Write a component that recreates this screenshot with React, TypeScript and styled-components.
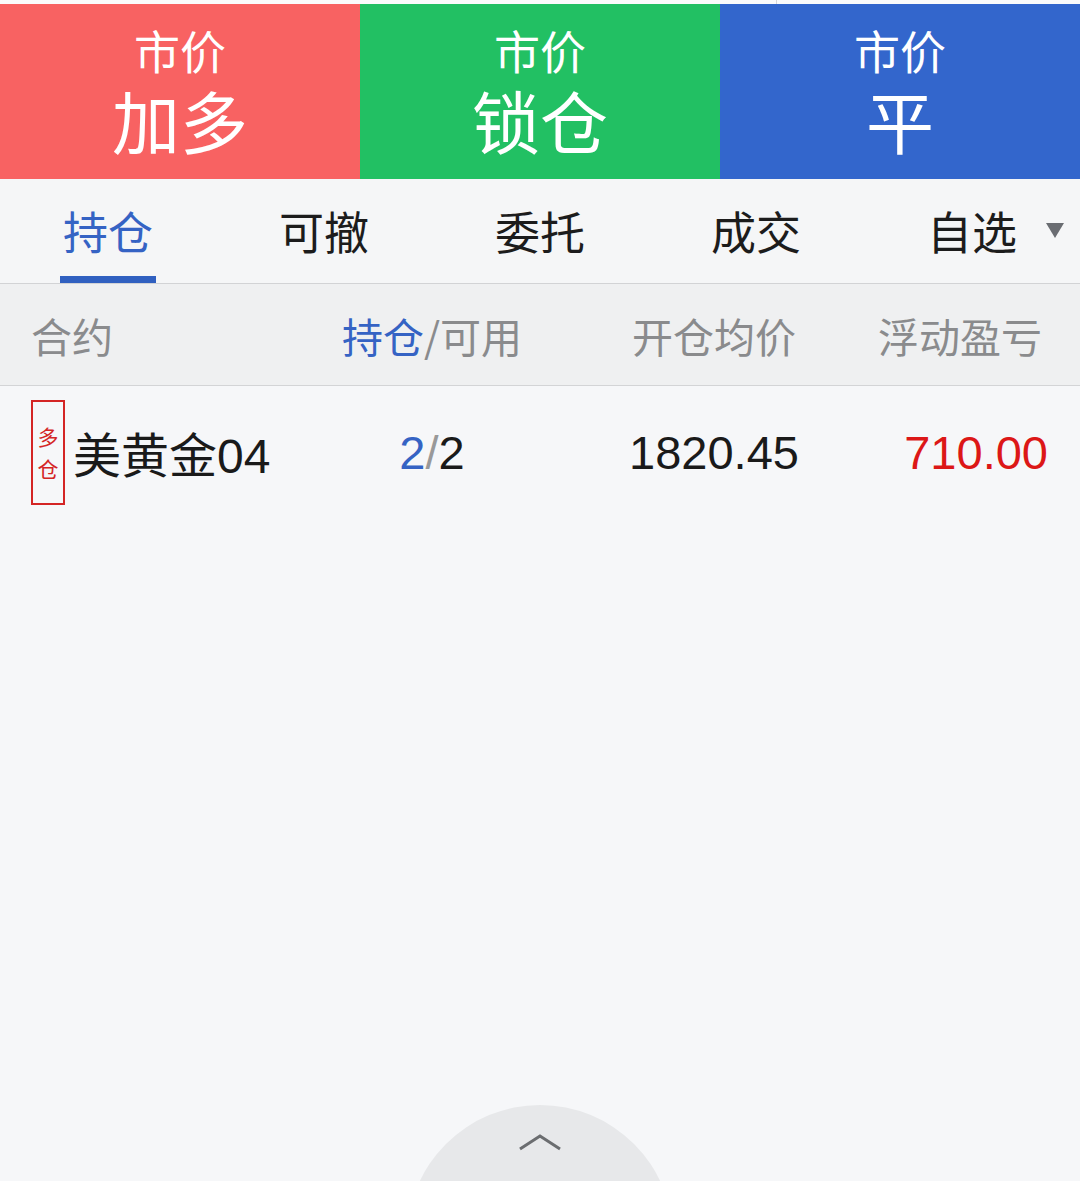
import React, { FC, ReactElement, useState } from 'react';
import { styled, createGlobalStyle } from 'styled-components';

const GlobalStyle = createGlobalStyle`
    html, body {
        margin: 0;
        padding: 0;
        background: #f6f7f9;
    }
    body {
        font-family: "Liberation Sans", "Noto Sans CJK SC", sans-serif;
    }
`

const Page = styled.div`
    display: flex;
    flex-direction: column;
    min-height: 100vh;
    width: 1080px;
    background: #f6f7f9;
`

const TopStrip = styled.div`
    display: grid;
    grid-template-columns: 776px 1fr;
    height: 4px;
    background: #fbfbfb;

    & > div + div {
        border-left: 1px solid #d8d8d8;
    }
`

const ActionBar = styled.div`
    display: grid;
    grid-template-columns: repeat(3, 1fr);
    height: 175px;
`

const ActionButton = styled.button<{ $bg: string }>`
    display: flex;
    flex-direction: column;
    align-items: center;
    justify-content: center;
    gap: 2px;
    border: none;
    margin: 0;
    padding: 0;
    background: ${p => p.$bg};
    color: #ffffff;
    font-family: "Noto Sans CJK SC", sans-serif;
    cursor: pointer;
`

const ActionSmall = styled.span`
    font-size: 46px;
    line-height: 1.2;
`

const ActionBig = styled.span`
    font-size: 68px;
    line-height: 1.2;
`

const TabBar = styled.div`
    display: grid;
    grid-template-columns: repeat(5, 1fr);
    height: 104px;
    background: #f5f6f7;
    border-bottom: 1px solid #d2d3d5;
`

const Tab = styled.div<{ $active?: boolean }>`
    position: relative;
    display: flex;
    align-items: center;
    justify-content: center;
    padding-bottom: 2px;
    font-family: "Noto Sans CJK SC", sans-serif;
    font-size: 45px;
    color: ${p => p.$active ? '#3563c4' : '#1c1c1c'};
    cursor: pointer;

    &::after {
        content: '';
        display: ${p => p.$active ? 'block' : 'none'};
        position: absolute;
        left: 60px;
        width: 96px;
        bottom: 0;
        height: 7px;
        background: #3060c0;
    }
`

const Caret = styled.span`
    position: absolute;
    right: 16px;
    top: 44px;
    width: 0;
    height: 0;
    border-left: 9px solid transparent;
    border-right: 9px solid transparent;
    border-top: 15px solid #6a6d72;
`

const TableGrid = styled.div`
    display: grid;
    grid-template-columns: 320px 224px 340px 196px;
    align-items: center;
`

const HeaderRow = styled(TableGrid)`
    height: 101px;
    background: #eff0f1;
    border-bottom: 1px solid #d3d4d6;
    font-family: "Noto Sans CJK SC", sans-serif;
    font-size: 41px;
    color: #8a8b8d;
`

const DataRow = styled(TableGrid)`
    height: 132px;
    font-size: 47px;
    color: #1a1a1a;
`

const Cell = styled.div<{ $align?: 'left' | 'center' | 'right'; $pad?: number }>`
    display: flex;
    align-items: center;
    justify-content: ${p => p.$align === 'right' ? 'flex-end' : p.$align === 'center' ? 'center' : 'flex-start'};
    padding: ${p => p.$align === 'right' ? `0 ${p.$pad ?? 32}px 0 0` : p.$align === 'center' ? '0' : '0 0 0 31px'};
    white-space: nowrap;
`

const Blue = styled.span`
    color: #3563c4;
`

const Slash = styled.span`
    color: #999;
`

const SideTag = styled.div`
    display: flex;
    flex-direction: column;
    align-items: center;
    justify-content: center;
    gap: 8px;
    box-sizing: border-box;
    width: 34px;
    height: 105px;
    margin-right: 8px;
    border: 2px solid #d42525;
    color: #d42525;
    font-family: "Noto Sans CJK SC", sans-serif;
    font-size: 21px;
    line-height: 24px;
`

const ContractName = styled.span`
    font-family: "Liberation Sans", "Noto Sans CJK SC", sans-serif;
    font-size: 48px;
`

const Profit = styled.span`
    color: #dc1717;
`

const Spacer = styled.div`
    flex: 1;
`

const PullTab = styled.div`
    display: flex;
    justify-content: center;
    height: 76px;
    overflow: hidden;
`

const PullCircle = styled.div`
    display: flex;
    justify-content: center;
    flex-shrink: 0;
    width: 266px;
    height: 266px;
    border-radius: 50%;
    background: #e7e8ea;
    padding-top: 28px;
    box-sizing: border-box;
`

type Position = {
    side: string;
    name: string;
    hold: number;
    avail: number;
    price: string;
    pnl: string;
}

const positions: Position[] = [
    { side: '多仓', name: '美黄金04', hold: 2, avail: 2, price: '1820.45', pnl: '710.00' },
]

const tabs = ['持仓', '可撤', '委托', '成交', '自选'];

const App: FC = (): ReactElement => {
    const [activeTab, setActiveTab] = useState<number>(0);

    return (
        <Page>
            <GlobalStyle />
            <TopStrip>
                <div></div>
                <div></div>
            </TopStrip>
            <ActionBar>
                <ActionButton $bg="#f86262">
                    <ActionSmall>市价</ActionSmall>
                    <ActionBig>加多</ActionBig>
                </ActionButton>
                <ActionButton $bg="#22c063">
                    <ActionSmall>市价</ActionSmall>
                    <ActionBig>锁仓</ActionBig>
                </ActionButton>
                <ActionButton $bg="#3366cc">
                    <ActionSmall>市价</ActionSmall>
                    <ActionBig>平</ActionBig>
                </ActionButton>
            </ActionBar>
            <TabBar>
                {tabs.map((t, i) => (
                    <Tab key={t} $active={i === activeTab} onClick={() => setActiveTab(i)}>
                        {t}
                        {i === tabs.length - 1 && <Caret />}
                    </Tab>
                ))}
            </TabBar>
            <HeaderRow>
                <Cell>合约</Cell>
                <Cell $align="center"><Blue>持仓</Blue>/可用</Cell>
                <Cell $align="center">开仓均价</Cell>
                <Cell $align="right" $pad={38}>浮动盈亏</Cell>
            </HeaderRow>
            {positions.map(p => (
                <DataRow key={p.name}>
                    <Cell>
                        <SideTag>
                            <span>{p.side[0]}</span>
                            <span>{p.side[1]}</span>
                        </SideTag>
                        <ContractName>{p.name}</ContractName>
                    </Cell>
                    <Cell $align="center"><Blue>{p.hold}</Blue><Slash>/</Slash>{p.avail}</Cell>
                    <Cell $align="center">{p.price}</Cell>
                    <Cell $align="right"><Profit>{p.pnl}</Profit></Cell>
                </DataRow>
            ))}
            <Spacer />
            <PullTab>
                <PullCircle>
                    <svg width="44" height="18" viewBox="0 0 44 18">
                        <path d="M2 16 L22 3 L42 16" fill="none" stroke="#6b6d70" strokeWidth="3" />
                    </svg>
                </PullCircle>
            </PullTab>
        </Page>
    )
}

export default App;
